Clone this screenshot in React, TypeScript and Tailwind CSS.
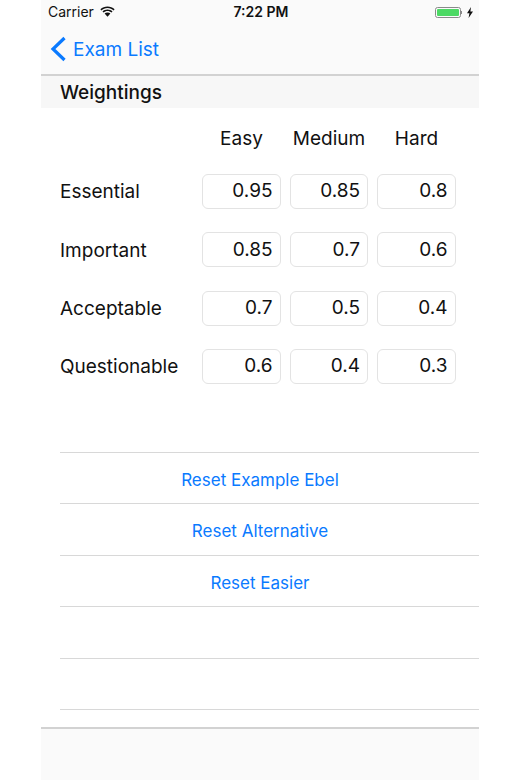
import React from 'react';

const font = "font-['Inter','Liberation_Sans',sans-serif]";

const rows = [
  { label: 'Essential', values: ['0.95', '0.85', '0.8'] },
  { label: 'Important', values: ['0.85', '0.7', '0.6'] },
  { label: 'Acceptable', values: ['0.7', '0.5', '0.4'] },
  { label: 'Questionable', values: ['0.6', '0.4', '0.3'] },
];

const resets = ['Reset Example Ebel', 'Reset Alternative', 'Reset Easier', '', ''];

function StatusBar() {
  return (
    <div className="grid h-6 grid-cols-[1fr_auto_1fr] items-center pl-[7px] pr-[6px] text-[14px] text-[#111]">
      <div className="flex items-center gap-[6px]">
        <span className="pb-[2px]">Carrier</span>
        <svg width="15" height="11" viewBox="0 0 15 11" fill="#111" className="-mt-[1px]">
          <path d="M7.5 2c2.4 0 4.5.9 6.1 2.4l1-1.1C12.700 1.500 10.200.5 7.500.5S2.300 1.500.4 3.300l1 1.100C3 2.900 5.100 2 7.500 2z" />
          <path d="M7.500 5c1.500 0 2.900.6 4 1.500l1-1.100C11.200 4.200 9.400 3.500 7.500 3.500S3.800 4.200 2.500 5.400l1 1.100C4.600 5.600 6 5 7.500 5z" />
          <path d="M7.500 6.500c-1.100 0-2.100.4-2.900 1.100l2.900 3.100 2.900-3.100c-.8-.7-1.800-1.100-2.900-1.100z" />
        </svg>
      </div>
      <span className="pb-[2px] pl-[1px] font-semibold">7:22 PM</span>
      <div className="flex items-center justify-end gap-[5px]">
        <div className="flex items-center">
          <div className="h-[11px] w-[26px] rounded-[2.5px] border border-[#8a8a8a] p-px">
            <div className="h-full w-full rounded-[1px] bg-[#4cd964]" />
          </div>
          <div className="h-[3px] w-px bg-[#8a8a8a]" />
        </div>
        <svg width="6" height="11" viewBox="0 0 6 11" fill="#111">
          <path d="M4 0 0 6.200h2.400L1.600 11 6 4.500H3.400z" />
        </svg>
      </div>
    </div>
  );
}

export default function App() {
  return (
    <div className={`${font} ml-[41px] flex h-[780px] w-[438px] flex-col overflow-hidden bg-white`}>
      <div className="h-[76px] border-b-2 border-[#d2d2d2] bg-[#fafafa]">
        <StatusBar />
        <div className="flex h-[50px] items-center gap-[6px] pl-[9px] text-[#0a7aff]">
          <svg width="17" height="26" viewBox="0 0 17 26" fill="none" stroke="currentColor" strokeWidth="3.200">
            <path d="M14.500 2 3 13l11.500 11" />
          </svg>
          <span className="mt-[2px] text-[19px]">Exam List</span>
        </div>
      </div>
      <div className="flex h-[32px] items-center bg-[#f7f7f7] pt-[2px] pl-[19px] text-[19px] font-medium text-[#111]">
        Weightings
      </div>

      <div className="flex h-[60px] items-center pt-[2px] pl-[161px] text-[19px] text-[#111]">
        <span className="w-[79px] text-center">Easy</span>
        <span className="ml-[9px] w-[78px] text-center">Medium</span>
        <span className="ml-[9px] w-[79px] text-center">Hard</span>
      </div>

      <div className="mt-[6px] flex flex-col gap-[23.330px] pl-[19px]">
        {rows.map((row) => (
          <div key={row.label} className="flex h-[35px] items-center text-[19px] text-[#111]">
            <span className="w-[142px] pt-[2px]">{row.label}</span>
            <div className="flex gap-[9px]">
              {row.values.map((value, i) => (
                <div
                  key={i}
                  className="flex h-[35px] w-[78.500px] items-center justify-end rounded-[6px] border border-[#e3e3e3] pr-[7px]"
                >
                  {value}
                </div>
              ))}
            </div>
          </div>
        ))}
      </div>

      <div className="mt-[68px] ml-[19px] border-t border-[#d8d8d8]">
        {resets.map((label, i) => (
          <div
            key={i}
            className="flex h-[51.500px] items-center justify-center border-b border-[#d8d8d8] pt-[5px] pr-[19px] text-[17px] text-[#0a7aff]"
          >
            {label}
          </div>
        ))}
      </div>

      <div className="mt-auto h-[53px] border-t-2 border-[#d2d2d2] bg-[#fafafa]" />
    </div>
  );
}
